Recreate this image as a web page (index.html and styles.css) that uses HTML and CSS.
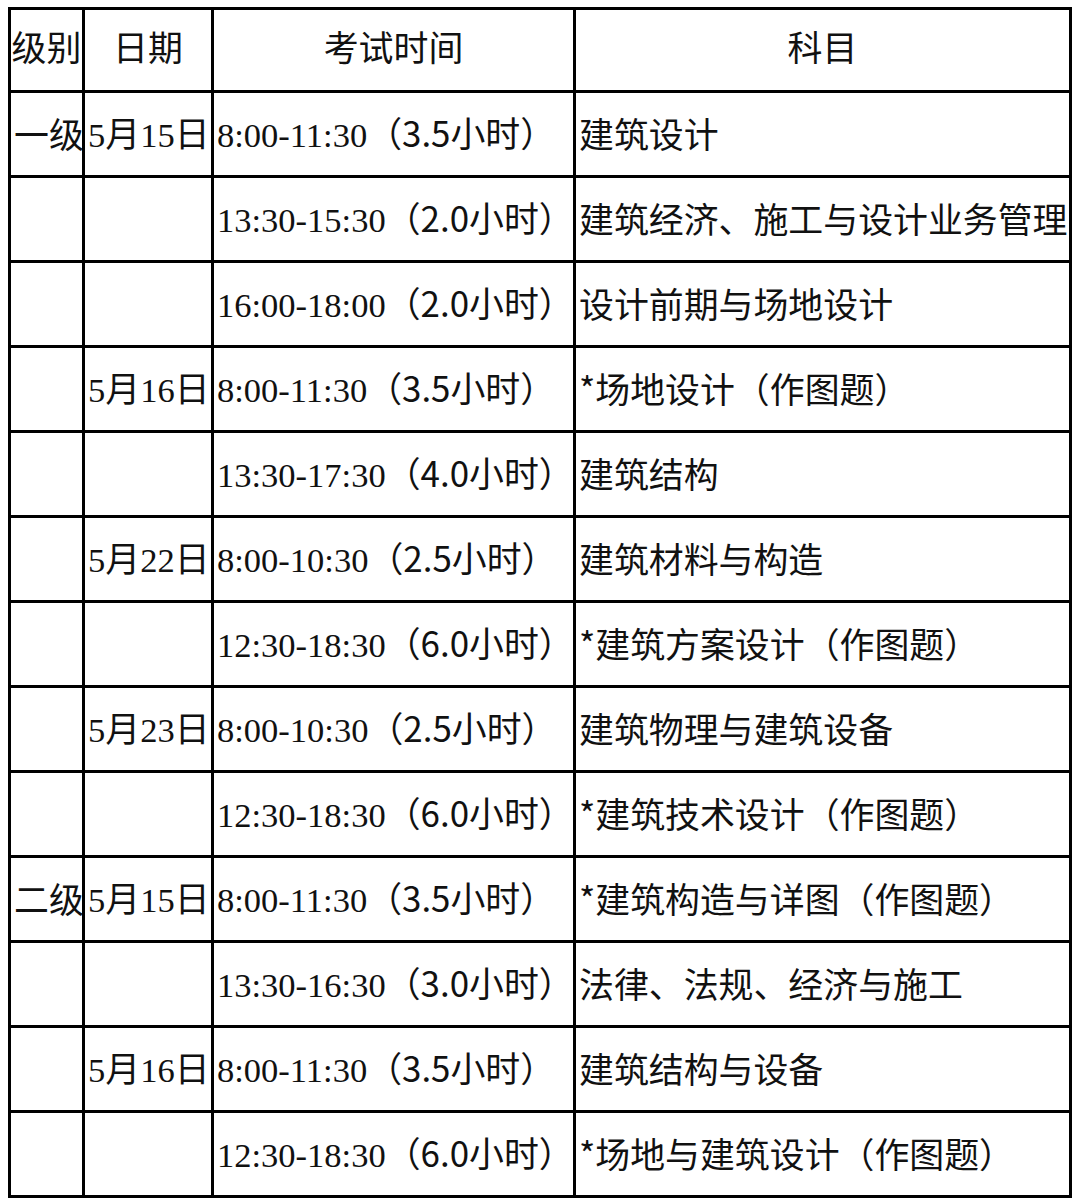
FILE: index.html
```html
<!DOCTYPE html>
<html lang="zh">
<head>
<meta charset="utf-8">
<title>考试时间安排</title>
<link rel="stylesheet" href="styles.css">
</head>
<body>
<table class="sheet">
  <colgroup>
    <col class="c-level">
    <col class="c-date">
    <col class="c-time">
    <col class="c-subject">
  </colgroup>
  <thead>
    <tr class="head-row">
      <th>级别</th>
      <th>日期</th>
      <th>考试时间</th>
      <th>科目</th>
    </tr>
  </thead>
  <tbody>
    <tr>
      <td>一级</td>
      <td><span class="lat">5</span>月<span class="lat">15</span>日</td>
      <td><span class="lat">8:00-11:30</span>（3.5小时）</td>
      <td>建筑设计</td>
    </tr>
    <tr>
      <td></td>
      <td></td>
      <td><span class="lat">13:30-15:30</span>（2.0小时）</td>
      <td>建筑经济、施工与设计业务管理</td>
    </tr>
    <tr>
      <td></td>
      <td></td>
      <td><span class="lat">16:00-18:00</span>（2.0小时）</td>
      <td>设计前期与场地设计</td>
    </tr>
    <tr>
      <td></td>
      <td><span class="lat">5</span>月<span class="lat">16</span>日</td>
      <td><span class="lat">8:00-11:30</span>（3.5小时）</td>
      <td>*场地设计（作图题）</td>
    </tr>
    <tr>
      <td></td>
      <td></td>
      <td><span class="lat">13:30-17:30</span>（4.0小时）</td>
      <td>建筑结构</td>
    </tr>
    <tr>
      <td></td>
      <td><span class="lat">5</span>月<span class="lat">22</span>日</td>
      <td><span class="lat">8:00-10:30</span>（2.5小时）</td>
      <td>建筑材料与构造</td>
    </tr>
    <tr>
      <td></td>
      <td></td>
      <td><span class="lat">12:30-18:30</span>（6.0小时）</td>
      <td>*建筑方案设计（作图题）</td>
    </tr>
    <tr>
      <td></td>
      <td><span class="lat">5</span>月<span class="lat">23</span>日</td>
      <td><span class="lat">8:00-10:30</span>（2.5小时）</td>
      <td>建筑物理与建筑设备</td>
    </tr>
    <tr>
      <td></td>
      <td></td>
      <td><span class="lat">12:30-18:30</span>（6.0小时）</td>
      <td>*建筑技术设计（作图题）</td>
    </tr>
    <tr>
      <td>二级</td>
      <td><span class="lat">5</span>月<span class="lat">15</span>日</td>
      <td><span class="lat">8:00-11:30</span>（3.5小时）</td>
      <td>*建筑构造与详图（作图题）</td>
    </tr>
    <tr>
      <td></td>
      <td></td>
      <td><span class="lat">13:30-16:30</span>（3.0小时）</td>
      <td>法律、法规、经济与施工</td>
    </tr>
    <tr>
      <td></td>
      <td><span class="lat">5</span>月<span class="lat">16</span>日</td>
      <td><span class="lat">8:00-11:30</span>（3.5小时）</td>
      <td>建筑结构与设备</td>
    </tr>
    <tr>
      <td></td>
      <td></td>
      <td><span class="lat">12:30-18:30</span>（6.0小时）</td>
      <td>*场地与建筑设计（作图题）</td>
    </tr>
  </tbody>
</table>
</body>
</html>
```

FILE: styles.css
```css
html, body {
  margin: 0;
  padding: 0;
  background: #fff;
}

.sheet {
  border-collapse: collapse;
  table-layout: fixed;
  width: 1064px;
  margin: 7px 0 0 8px;
  color: #111;
}

.c-level { width: 74px; }
.c-date { width: 129px; }
.c-time { width: 362px; }
.c-subject { width: 496px; }

.sheet th,
.sheet td {
  border: 3px solid #000;
  padding: 0 0 0 3px;
  font-family: "Noto Sans CJK SC", "Noto Sans", sans-serif;
  font-size: 34.9px;
  font-weight: 400;
  line-height: 1.2;
  white-space: nowrap;
  overflow: hidden;
  text-align: left;
  vertical-align: middle;
}

.sheet th {
  text-align: center;
  padding: 0 0 6px 0;
}

.head-row { height: 83px; }
.sheet tbody tr { height: 85px; }

.lat {
  font-family: "Liberation Serif", "Times New Roman", serif;
  font-size: 34.5px;
}
```
